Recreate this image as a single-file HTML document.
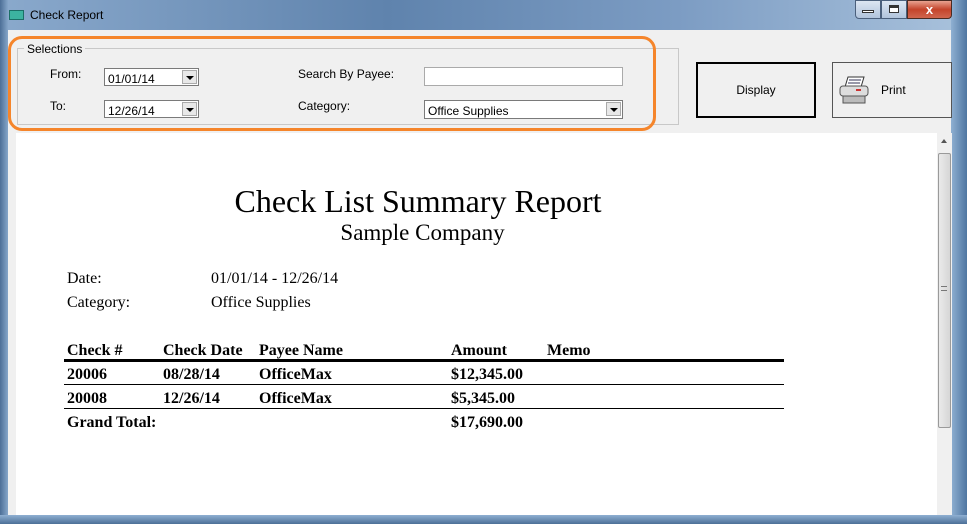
<!DOCTYPE html>
<html><head><style>
*{margin:0;padding:0;box-sizing:border-box}
body{width:967px;height:524px;overflow:hidden;position:relative;background:#f0f0f0;font-family:"Liberation Sans",sans-serif;font-size:12px}
.a{position:absolute}
.s{font-family:"Liberation Serif",serif;color:#000}
.b{font-weight:bold;font-size:16px}
.combo{background:#fff;border:1px solid #7a7a7a;font-size:12px;padding:3px 0 0 3px}
.dd{position:absolute;right:1px;top:1px;width:15px;height:14px;background:#e8e8e8;border:1px solid #aaa}
.dd:after{content:"";position:absolute;left:3px;top:5px;border-left:4px solid transparent;border-right:4px solid transparent;border-top:4px solid #000}
</style></head><body>
<div class="a" style="left:0;top:0;width:967px;height:30px;background:linear-gradient(90deg,#8aa9cc,#5f83ad 40%,#7c9cc3 70%,#a9c2dc)"></div>
<div class="a" style="left:0;top:0;width:8px;height:524px;background:linear-gradient(90deg,#4c6f97,#86a6c9)"></div>
<div class="a" style="right:0;top:0;width:16px;height:524px;background:linear-gradient(90deg,#8fb0d2,#4f76a1)"></div>
<div class="a" style="left:0;top:515px;width:967px;height:9px;background:linear-gradient(#8fb0d2,#4c6f97)"></div>
<div class="a" style="left:9px;top:10px;width:15px;height:10px;background:#3cb3a0;border:1px solid #1b6f66"></div>
<div class="a" style="left:30px;top:8px;font-size:12px;color:#000">Check Report</div>
<div class="a" style="left:855px;top:0;width:26px;height:19px;background:linear-gradient(#dce6f2,#b1c4dc);border:1px solid #4b607c;border-radius:0 0 0 4px"></div>
<div class="a" style="left:862px;top:10px;width:12px;height:3px;background:#fff;border:1px solid #333"></div>
<div class="a" style="left:881px;top:0;width:26px;height:19px;background:linear-gradient(#dce6f2,#b1c4dc);border:1px solid #4b607c"></div>
<div class="a" style="left:889px;top:5px;width:10px;height:8px;border:1px solid #333;border-top-width:3px;background:#fff"></div>
<div class="a" style="left:907px;top:0;width:45px;height:19px;background:linear-gradient(#e8a290,#c4442b 50%,#d0664e);border:1px solid #4b2b22;border-radius:0 0 4px 0;color:#fff;font-weight:bold;text-align:center;font-size:13px;line-height:17px">x</div>
<div class="a" style="left:8px;top:30px;width:943px;height:485px;background:#f0f0f0"></div>
<div class="a" style="left:17px;top:48px;width:662px;height:77px;border:1px solid #c8c8c8"></div>
<div class="a" style="left:24px;top:42px;background:#f0f0f0;padding:0 3px">Selections</div>
<div class="a" style="left:50px;top:67px">From:</div>
<div class="a" style="left:50px;top:99px">To:</div>
<div class="a combo" style="left:104px;top:68px;width:95px;height:18px">01/01/14<div class="dd"></div></div>
<div class="a combo" style="left:104px;top:100px;width:95px;height:18px">12/26/14<div class="dd"></div></div>
<div class="a" style="left:298px;top:67px">Search By Payee:</div>
<div class="a" style="left:298px;top:99px">Category:</div>
<div class="a" style="left:424px;top:67px;width:199px;height:19px;background:#fff;border:1px solid #aaa"></div>
<div class="a combo" style="left:424px;top:100px;width:199px;height:19px">Office Supplies<div class="dd"></div></div>
<div class="a" style="left:8px;top:36px;width:648px;height:95px;border:3px solid #f5852b;border-radius:14px"></div>
<div class="a" style="left:696px;top:62px;width:120px;height:56px;border:2px solid #000;background:#f0f0f0;text-align:center;line-height:52px">Display</div>
<div class="a" style="left:832px;top:62px;width:120px;height:56px;border:1px solid #555;background:#f0f0f0"></div>
<svg class="a" style="left:838px;top:74px" width="34" height="32"><path d="M10 3 L26 3 L23 13 L7 13 Z" fill="#fff" stroke="#333"/><path d="M11 6h12M10 9h12" stroke="#335"/><rect x="2" y="12" width="28" height="10" rx="3" fill="#ddd" stroke="#555"/><rect x="5" y="22" width="22" height="7" fill="#bbb" stroke="#555"/><path d="M18 16h5" stroke="#c33" stroke-width="2"/></svg>
<div class="a" style="left:881px;top:83px">Print</div>
<div class="a" style="left:16px;top:133px;width:921px;height:382px;background:#fff"></div>
<div class="a" style="left:937px;top:133px;width:15px;height:382px;background:#f0f0f0"></div>
<div class="a" style="left:938px;top:153px;width:13px;height:275px;background:linear-gradient(90deg,#eaeaea,#d6d6d6);border:1px solid #9a9a9a;border-radius:2px"></div>
<div class="a" style="left:941px;top:139px;border-left:3px solid transparent;border-right:3px solid transparent;border-bottom:4px solid #555"></div>
<div class="a" style="left:941px;top:286px;width:6px;height:5px;border-top:1px solid #777;border-bottom:1px solid #777"></div>
<div class="a s" style="left:0;width:836px;top:183px;text-align:center;font-size:32px">Check List Summary Report</div>
<div class="a s" style="left:0;width:845px;top:220px;text-align:center;font-size:23px">Sample Company</div>
<div class="a s" style="left:67px;top:270px;font-size:16px">Date:</div>
<div class="a s" style="left:211px;top:270px;font-size:16px">01/01/14 - 12/26/14</div>
<div class="a s" style="left:67px;top:294px;font-size:16px">Category:</div>
<div class="a s" style="left:211px;top:294px;font-size:16px">Office Supplies</div>
<div class="a s b" style="left:67px;top:342px">Check #</div>
<div class="a s b" style="left:163px;top:342px">Check Date</div>
<div class="a s b" style="left:259px;top:342px">Payee Name</div>
<div class="a s b" style="left:451px;top:342px">Amount</div>
<div class="a s b" style="left:547px;top:342px">Memo</div>
<div class="a" style="left:64px;top:359px;width:720px;height:3px;background:#000"></div>
<div class="a s b" style="left:67px;top:366px">20006</div>
<div class="a s b" style="left:163px;top:366px">08/28/14</div>
<div class="a s b" style="left:259px;top:366px">OfficeMax</div>
<div class="a s b" style="left:451px;top:366px">$12,345.00</div>
<div class="a" style="left:64px;top:384px;width:720px;height:1px;background:#000"></div>
<div class="a s b" style="left:67px;top:390px">20008</div>
<div class="a s b" style="left:163px;top:390px">12/26/14</div>
<div class="a s b" style="left:259px;top:390px">OfficeMax</div>
<div class="a s b" style="left:451px;top:390px">$5,345.00</div>
<div class="a" style="left:64px;top:408px;width:720px;height:1px;background:#000"></div>
<div class="a s b" style="left:67px;top:414px">Grand Total:</div>
<div class="a s b" style="left:451px;top:414px">$17,690.00</div>
</body></html>
